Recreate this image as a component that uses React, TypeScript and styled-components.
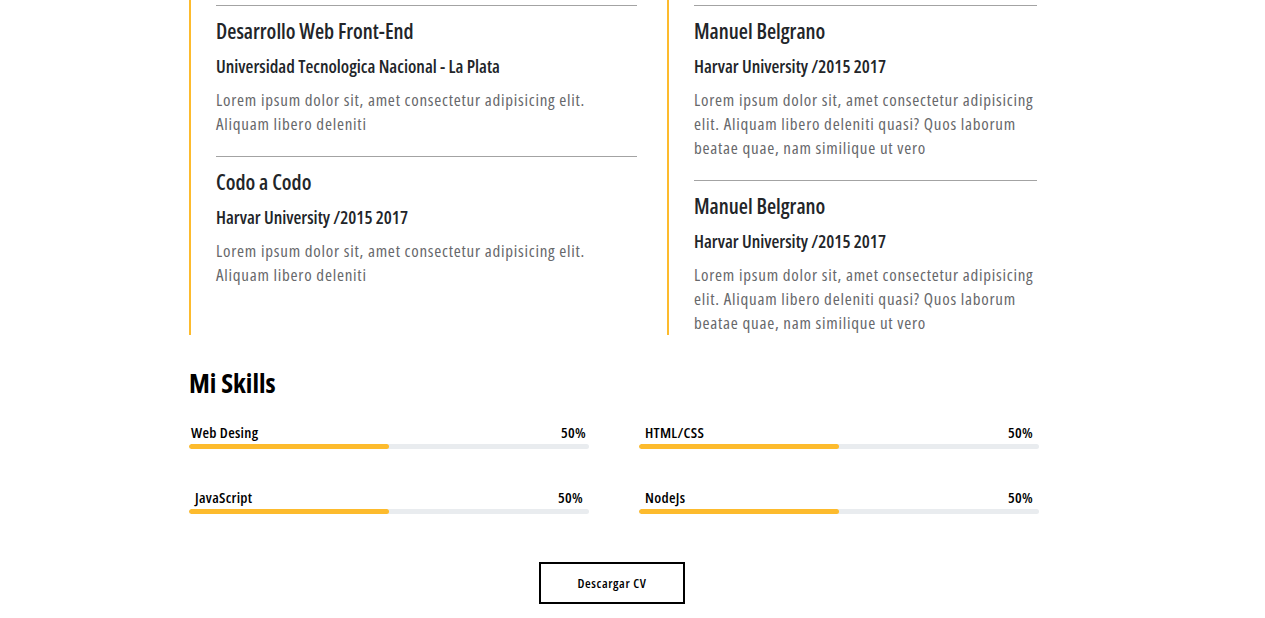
import styled, { createGlobalStyle } from 'styled-components';

const EDUCATION = [
  {
    id: 'frontend',
    title: 'Desarrollo Web Front-End',
    place: 'Universidad Tecnologica Nacional - La Plata',
    text: 'Lorem ipsum dolor sit, amet consectetur adipisicing elit. Aliquam libero deleniti',
  },
  {
    id: 'codo',
    title: 'Codo a Codo',
    place: 'Harvar University /2015 2017',
    text: 'Lorem ipsum dolor sit, amet consectetur adipisicing elit. Aliquam libero deleniti',
  },
];

const EXPERIENCE = [
  {
    id: 'belgrano-1',
    title: 'Manuel Belgrano',
    place: 'Harvar University /2015 2017',
    text: 'Lorem ipsum dolor sit, amet consectetur adipisicing elit. Aliquam libero deleniti quasi? Quos laborum beatae quae, nam similique ut vero',
  },
  {
    id: 'belgrano-2',
    title: 'Manuel Belgrano',
    place: 'Harvar University /2015 2017',
    text: 'Lorem ipsum dolor sit, amet consectetur adipisicing elit. Aliquam libero deleniti quasi? Quos laborum beatae quae, nam similique ut vero',
  },
];

// inset = [left, right] padding of the label row
const SKILLS = [
  { id: 'web', label: 'Web Desing', value: 50, inset: [2, 3] },
  { id: 'html', label: 'HTML/CSS', value: 50, inset: [6, 6] },
  { id: 'js', label: 'JavaScript', value: 50, inset: [6, 6] },
  { id: 'node', label: 'NodeJs', value: 50, inset: [6, 6] },
];

type Item = { id: string; title: string; place: string; text: string };

const Timeline = ({ items, $wide }: { items: Item[]; $wide?: boolean }) => (
  <ColumnStyle $wide={$wide}>
    {items.map((item) => (
      <EntryStyle key={item.id}>
        <DividerStyle />
        <EntryTitleStyle>{item.title}</EntryTitleStyle>
        <EntryPlaceStyle>{item.place}</EntryPlaceStyle>
        <EntryTextStyle>{item.text}</EntryTextStyle>
      </EntryStyle>
    ))}
  </ColumnStyle>
);

export default function App() {
  return (
    <>
      <GlobalStyle />
      <PageStyle>
        <ContainerStyle>
          <TimelineRowStyle>
            <Timeline items={EDUCATION} $wide />
            <Timeline items={EXPERIENCE} />
          </TimelineRowStyle>

          <SkillsTitleStyle>Mi Skills</SkillsTitleStyle>
          <SkillsGridStyle>
            {SKILLS.map((skill) => (
              <SkillStyle key={skill.id}>
                <SkillHeadStyle $left={skill.inset[0]} $right={skill.inset[1]}>
                  <span>{skill.label}</span>
                  <span>{skill.value}%</span>
                </SkillHeadStyle>
                <TrackStyle>
                  <FillStyle style={{ width: `${skill.value}%` }} />
                </TrackStyle>
              </SkillStyle>
            ))}
          </SkillsGridStyle>

          <ButtonRowStyle>
            <ButtonStyle>Descargar CV</ButtonStyle>
          </ButtonRowStyle>
        </ContainerStyle>
      </PageStyle>
    </>
  );
}

const FONT = `"Open Sans", "Noto Sans", "DejaVu Sans Condensed", sans-serif`;

const GlobalStyle = createGlobalStyle`
  * { box-sizing: border-box; }
  body {
    margin: 0;
    background: #ffffff;
    font-family: ${FONT};
    font-stretch: 75%;
  }
`;

const PageStyle = styled.main`
  width: 1265px;
  height: 618px;
  overflow: hidden;
  background: #ffffff;
`;

const ContainerStyle = styled.div`
  width: 850px;
  margin-left: 189px;
`;

const TimelineRowStyle = styled.div`
  display: flex;
  align-items: stretch;
`;

const ColumnStyle = styled.div<{ $wide?: boolean }>`
  width: ${({ $wide }) => ($wide ? '478px' : '370px')};
  border-left: 2px solid #fdbb2d;
  padding: 5px ${({ $wide }) => ($wide ? '30px' : '0')} 0 25px;
`;

const EntryStyle = styled.div`
  padding-bottom: 20px;

  &:last-child {
    padding-bottom: 0;
  }
`;

const DividerStyle = styled.hr`
  margin: 0 0 11px;
  border: 0;
  border-top: 1px solid #a3a3a3;
`;

const EntryTitleStyle = styled.h3`
  margin: 0 0 9px;
  font-size: 21px;
  line-height: 28px;
  font-weight: 600;
  color: #222529;
`;

const EntryPlaceStyle = styled.h4`
  margin: 0 0 10px;
  font-size: 18px;
  line-height: 24px;
  font-weight: 600;
  color: #222529;
`;

const EntryTextStyle = styled.p`
  margin: 0;
  font-size: 17px;
  line-height: 24px;
  font-weight: 500;
  letter-spacing: 0.75px;
  color: #67686b;
`;

const SkillsTitleStyle = styled.h2`
  margin: 32px 0 0;
  font-size: 27px;
  line-height: 32px;
  font-weight: 700;
  color: #000000;
`;

const SkillsGridStyle = styled.div`
  display: grid;
  grid-template-columns: 400px 400px;
  column-gap: 50px;
  row-gap: 40px;
  margin-top: 25px;
`;

const SkillStyle = styled.div`
  display: flex;
  flex-direction: column;
  gap: 3px;
`;

const SkillHeadStyle = styled.div<{ $left: number; $right: number }>`
  display: flex;
  justify-content: space-between;
  padding: 0 ${({ $right }) => $right}px 0 ${({ $left }) => $left}px;
  font-size: 15px;
  line-height: 17px;
  font-weight: 600;
  letter-spacing: 0.3px;
  color: #000000;
`;

const TrackStyle = styled.div`
  height: 5px;
  border-radius: 3px;
  background: #e9ecef;
  overflow: hidden;
`;

const FillStyle = styled.div`
  height: 100%;
  border-radius: 3px;
  background: #fdbb2d;
`;

const ButtonRowStyle = styled.div`
  display: flex;
  justify-content: center;
  padding-right: 4px;
  margin-top: 48px;
`;

const ButtonStyle = styled.button`
  width: 146px;
  height: 42px;
  border: 2px solid #000000;
  background: #ffffff;
  font-family: ${FONT};
  font-stretch: 75%;
  font-size: 13px;
  font-weight: 600;
  letter-spacing: 0.6px;
  color: #000000;
  cursor: pointer;
`;
